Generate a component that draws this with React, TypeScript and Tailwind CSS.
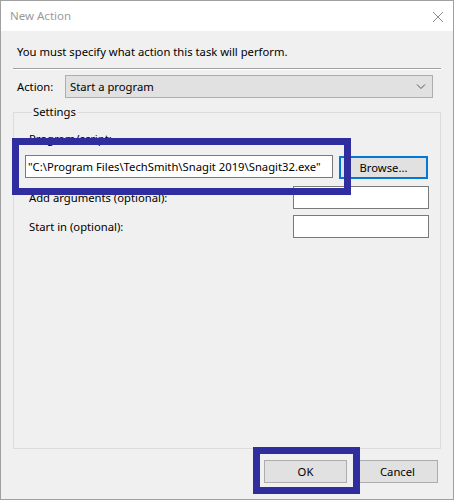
import React from 'react';

const FONT = "font-['Noto_Sans',sans-serif]";

function TextBox({ value, className }: { value?: string; className: string }) {
  return (
    <div className={`h-[23px] border border-[#7a7a7a] bg-white flex items-center px-[2px] text-[11.25px] text-black whitespace-nowrap overflow-hidden ${className}`}>
      {value}
    </div>
  );
}

function Button({ label, focused, className }: { label: string; focused?: boolean; className: string }) {
  return (
    <div
      className={`h-[23px] flex items-center justify-center bg-[#e1e1e1] text-[11.25px] text-black ${
        focused ? 'border-2 border-[#0078d7]' : 'border border-[#adadad]'
      } ${className}`}
    >
      {label}
    </div>
  );
}

export default function App() {
  return (
    <div className={`relative w-[454px] h-[500px] flex flex-col border border-[#a0a0a0] bg-white ${FONT}`}>
      {/* Title bar */}
      <div className="h-[30px] shrink-0 flex items-center justify-between pl-[9px] pr-[9px] bg-white">
        <span className="text-[11.5px] text-[#9a9a9a]">New Action</span>
        <svg width="12" height="12" viewBox="0 0 12 12" className="mt-[1px]">
          <path d="M1 1L11 11M11 1L1 11" stroke="#8c8c8c" strokeWidth="1" fill="none" />
        </svg>
      </div>

      {/* Client area */}
      <div className="flex-1 flex flex-col bg-[#f0f0f0] px-[12px] pt-[13px] pb-[16px] text-[11.25px] leading-[16px] text-black">
        <p className="pl-[4px]">You must specify what action this task will perform.</p>
        <div className="mt-[8px] h-[2px] border-t border-[#a0a0a0] border-b border-b-white" />

        <div className="mt-[5px] flex items-center">
          <span className="pl-[4px] w-[52px]">Action:</span>
          <div className="flex-1 mr-[8px] h-[23px] border border-[#adadad] bg-[#e1e1e1] flex items-center justify-between pl-[4px] pr-[6px]">
            <span>Start a program</span>
            <svg width="10" height="6" viewBox="0 0 10 6">
              <path d="M1 0.5L5 4.5L9 0.5" stroke="#555" strokeWidth="1" fill="none" />
            </svg>
          </div>
        </div>

        <fieldset className="mt-[6px] flex-1 border border-[#dcdcdc] px-[11px]">
          <legend className="ml-[7px] px-[1px]">Settings</legend>
          <div className="mt-[11px] pl-[4px]">Program/script:</div>
          <div className="mt-[7px] flex items-center gap-[6px]">
            <TextBox value={'"C:\\Program Files\\TechSmith\\Snagit 2019\\Snagit32.exe"'} className="w-[308px]" />
            <Button label="Browse..." focused className="w-[89px] mt-[2px]" />
          </div>
          <div className="mt-[7px] flex items-center justify-between">
            <span className="pl-[4px]">Add arguments (optional):</span>
            <TextBox className="w-[136px]" />
          </div>
          <div className="mt-[6px] flex items-center justify-between">
            <span className="pl-[4px]">Start in (optional):</span>
            <TextBox className="w-[136px]" />
          </div>
        </fieldset>

        <div className="mt-[11px] flex justify-end gap-[10px] pr-[3px]">
          <Button label="OK" className="w-[83px]" />
          <Button label="Cancel" className="w-[81px]" />
        </div>
      </div>

      {/* Annotation highlights */}
      <div className="absolute left-[11px] top-[137px] w-[339px] h-[57px] border-[7px] border-[#302e9e]" />
      <div className="absolute left-[252px] top-[446px] w-[107px] h-[47px] border-[7px] border-[#302e9e]" />
    </div>
  );
}
